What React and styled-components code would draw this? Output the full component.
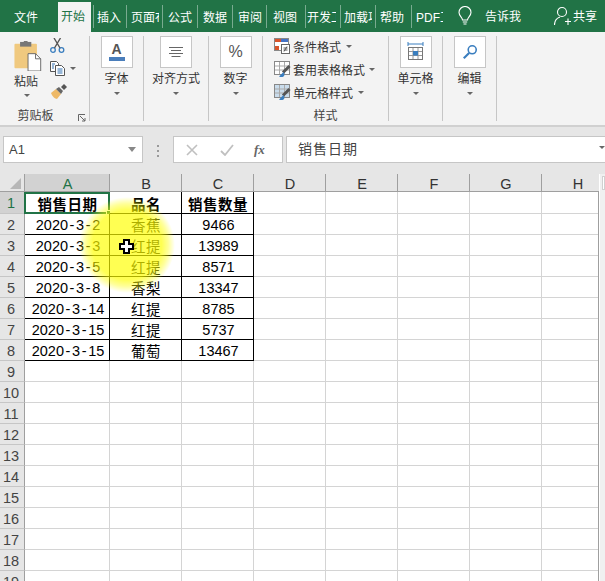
import React from "react";
import styled, { createGlobalStyle } from "styled-components";

const Global = createGlobalStyle`
  html, body { margin: 0; padding: 0; background: #fff; }
  * { box-sizing: border-box; }
`;
const CJK = `"Liberation Sans", "Noto Sans CJK SC", sans-serif`;

const Page = styled.div`
  position: relative; width: 605px; height: 581px; overflow: hidden;
  font-family: ${CJK}; color: #333; background: #fff;
  display: flex; flex-direction: column;
`;
/* ---------- tab bar ---------- */
const TabBar = styled.div`
  flex: 0 0 32px; background: #217346; display: flex; align-items: flex-end; color: #fff; font-size: 12px;
`;
const Tab = styled.div`
  flex: 0 0 ${p => p.$w}px; height: ${p => (p.$active ? 30 : 23)}px;
  margin-bottom: ${p => (p.$active ? 0 : 4)}px;
  margin-right: ${p => (p.$active ? 2 : 0)}px;
  display: flex; align-items: center; overflow: hidden;
  padding: 0 0 ${p => (p.$active ? 4 : 1)}px ${p => p.$pad ?? 4}px;
  background: ${p => (p.$active ? "#f3f3f3" : "transparent")};
  color: ${p => (p.$active ? "#217346" : "#fff")};
  border-left: ${p => (p.$sep ? "1px solid rgba(255,255,255,.4)" : "0")};
`;
const TabText = styled.span`
  display: block; flex: none; width: ${p => p.$clip ?? 40}px; overflow: hidden; white-space: nowrap;
`;
const TabTools = styled.div`
  flex: 1; height: 32px; display: flex; align-items: center; padding-left: 11px; border-left: 1px solid rgba(255,255,255,0); position: relative;
`;
const ToolText = styled.span`
  margin-left: ${p => p.$ml}px; white-space: nowrap; padding-bottom: ${p => p.$pb ?? 0}px;
`;
const ToolIcon = styled.span`
  display: flex; margin-left: ${p => p.$ml ?? 0}px;
`;
/* ---------- ribbon ---------- */
const Ribbon = styled.div`
  flex: 0 0 93px; background: #f3f3f3; display: flex; padding: 4px 0; position: relative;
`;
const Group = styled.div`
  flex: 0 0 ${p => p.$w}px; display: flex; flex-direction: column; align-items: center;
  border-right: 1px solid #c6c6c6; font-size: 12px; color: #333; position: relative;
`;
const LastGroupGap = styled.div`flex: 1;`;
const BoxButton = styled.div`
  width: 32px; height: 32px; background: #fff; border: 1px solid #c6c6c6;
  display: flex; align-items: center; justify-content: center; flex-direction: column;
`;
const BigLabel = styled.div`
  margin-top: 3px; line-height: 16px; white-space: nowrap;
`;
const Caret = styled.span`
  display: block; width: 0; height: 0; border-left: 3px solid transparent; border-right: 3px solid transparent;
  border-top: 3px solid #666; margin-top: ${p => p.$mt ?? 0}px; margin-left: ${p => p.$ml ?? 0}px; flex: none;
`;
const NameCaret = styled(Caret)`
  border-left-width: 4px; border-right-width: 4px; border-top-width: 5px; border-top-color: #888; margin-right: 1px;
`;
const GroupLabel = styled.div`
  margin-top: auto; margin-bottom: -3px; line-height: 14px; height: 15px; color: #444;
  margin-right: ${p => p.$mr ?? 0}px;
`;
const ClipBody = styled.div`
  flex: 1; width: 100%; display: flex;
`;
const PasteCol = styled.div`
  width: 50px; display: flex; flex-direction: column; align-items: flex-start; padding: 5px 0 0 14px;
`;
const SmallCol = styled.div`
  display: flex; flex-direction: column; gap: 8px; padding-top: 2px;
`;
const SmallRow = styled.div`display: flex; align-items: center; height: 15px;`;
const Launcher = styled.svg`
  position: absolute; right: 3px; bottom: -1px;
`;
const StyleList = styled.div`
  width: 100%; padding: 1px 0 0 11px; display: flex; flex-direction: column; gap: 5px;
`;
const StyleRow = styled.div`
  height: 18px; display: flex; align-items: center; gap: 2px; white-space: nowrap;
`;
const BoxLetter = styled.span`
  font-size: ${p => p.$size}px; line-height: ${p => p.$lh}px; color: #555; font-weight: ${p => p.$w ?? 400};
`;
const ColorBar = styled.span`display: block; width: 16px; height: 4px; margin-top: 1px; background: #4a7ebb;`;
/* ---------- formula bar ---------- */
const FormulaBar = styled.div`
  flex: 0 0 49px; background: #e6e6e6; border-top: 2px solid #d0d0d0; display: flex; align-items: flex-start;
  padding-top: 9px;
`;
const NameBox = styled.div`
  margin-left: 3px; width: 140px; height: 27px; background: #fff; border: 1px solid #c6c6c6;
  display: flex; align-items: center; justify-content: space-between; padding: 0 5px 1px 5px; font-size: 13px; color: #444;
`;
const Dots = styled.div`
  width: 30px; display: flex; flex-direction: column; align-items: center; gap: 3px; padding-top: 9px; height: 27px;
`;
const Dot = styled.span`display: block; width: 2px; height: 2px; background: #999;`;
const FxBox = styled.div`
  width: 110px; height: 27px; background: #fff; border: 1px solid #c6c6c6; display: flex; align-items: center;
  padding-left: 12px; gap: 22px; color: #bbb;
`;
const FxText = styled.span`
  font-family: "Liberation Serif", serif; font-style: italic; font-weight: 700; font-size: 13px; color: #666; margin-left: -2px;
`;
const Input = styled.div`
  margin-left: 3px; flex: 1; height: 27px; background: #fff; border: 1px solid #c6c6c6; border-right: 0;
  display: flex; align-items: center; padding: 0 0 4px 11px; font-size: 14px; letter-spacing: 1px; color: #444; justify-content: space-between;
`;
/* ---------- sheet ---------- */
const SheetWrap = styled.div`flex: 1; display: flex; overflow: hidden; background: #e6e6e6;`;
const Sheet = styled.div`
  flex: 0 0 599px; display: grid; grid-template-columns: 25px 85px 72px 72px 72px 72px 72px 72px 72px;
  grid-template-rows: 18px 22px; grid-auto-rows: 21px; align-content: start;
  font-size: 14.5px; color: #000; background: #fff; height: 100%; overflow: hidden;
  position: relative;
`;
const SheetEdge = styled.div`
  position: absolute; right: 0; top: 18px; bottom: 0; width: 1px; background: #9f9f9f;
`;
const Corner = styled.div`
  background: #e6e6e6; border-right: 1px solid #9f9f9f; border-bottom: 1px solid #9f9f9f; position: relative;
  &::after {
    content: ""; position: absolute; right: 3px; bottom: 2px; width: 0; height: 0;
    border-left: 11px solid transparent; border-bottom: 11px solid #b7b7b7;
  }
`;
const ColHead = styled.div`
  background: ${p => (p.$sel ? "#d2d2d2" : "#e6e6e6")};
  color: ${p => (p.$sel ? "#217346" : "#333")};
  border-right: 1px solid #9f9f9f; border-bottom: 1px solid #9f9f9f;
  display: flex; align-items: center; justify-content: center; padding: 3px 0 0 1px;
`;
const RowHead = styled.div`
  background: ${p => (p.$sel ? "#d2d2d2" : "#e6e6e6")};
  color: ${p => (p.$sel ? "#217346" : "#444")};
  border-right: 1px solid ${p => (p.$sel ? "#217346" : "#9f9f9f")}; border-bottom: 1px solid #c6c6c6;
  display: flex; align-items: center; justify-content: center; padding: 1px 2px 0 0;
`;
const Cell = styled.div`
  position: relative; display: flex; align-items: center; justify-content: center; white-space: nowrap;
  border-right: 1px solid ${p => (p.$black ? "#000" : "#d4d4d4")};
  border-bottom: 1px solid ${p => (p.$black ? "#000" : "#d4d4d4")};
  font-weight: ${p => (p.$bold ? 700 : 400)};
  letter-spacing: ${p => (p.$cjk ? 0.5 : 0)}px;
  padding: 1px 0 0 ${p => (p.$cjk ? 1 : 2)}px;
`;
const Selection = styled.span`
  position: absolute; left: -1px; top: 0; right: -1px; bottom: -1px; border: 2px solid #217346; pointer-events: none;
`;
const Handle = styled.span`
  position: absolute; right: -3px; bottom: -3px; width: 5px; height: 5px; background: #217346; border: 1px solid #fff;
`;
const Dash = styled.span`margin: 0 1.6px;`;
const Scroll = styled.div`
  flex: 1; background: #f0f0f0; border-left: 1px solid #fff; padding: 2px 0 0 2px;
`;
const ScrollBtn = styled.div`height: 14px; background: #fff; border: 1px solid #d0d0d0;`;
const Highlight = styled.div`
  position: absolute; left: 79px; top: 197px; width: 96px; height: 96px; border-radius: 50%; pointer-events: none;
  background: radial-gradient(circle closest-side, rgba(255,255,0,.68) 0, rgba(255,255,0,.68) 72%, rgba(255,255,0,.4) 86%, rgba(255,255,0,0) 100%);
`;
const Pointer = styled.svg`position: absolute; left: 119px; top: 239px; pointer-events: none;`;

/* ---------- icons ---------- */
const Paste = () => (
  <svg width="29" height="30" viewBox="0 0 30 32">
    <rect x="0" y="3" width="24" height="26" rx="1" fill="#f0c97f" />
    <rect x="6" y="1" width="12" height="5" fill="#777" />
    <rect x="10" y="0" width="4" height="3" fill="#777" />
    <path d="M14.5 13.5h8l5.5 5.5v13h-13.500z" fill="#fff" stroke="#666" />
    <path d="M22.500 13.500v5.500h5.500" fill="none" stroke="#666" />
  </svg>
);
const Scissors = () => (
  <svg width="15" height="15" viewBox="0 0 15 15" fill="none">
    <circle cx="3" cy="12" r="2.300" stroke="#3a7ebf" strokeWidth="1.300" />
    <circle cx="11.500" cy="12" r="2.300" stroke="#3a7ebf" strokeWidth="1.300" />
    <path d="M4.500 10 10.500 0M10 10 4 0" stroke="#555" strokeWidth="1.400" />
  </svg>
);
const CopyIcon = () => (
  <svg width="16" height="15" viewBox="0 0 16 15" fill="none">
    <path d="M.5.500h6l2 2v8h-8z" fill="#fff" stroke="#555" />
    <path d="M5.500 4.500h6l3 3v7h-9z" fill="#fff" stroke="#555" />
    <path d="M2 3h3M2 5h2M2 7h2M7.500 8h5M7.500 10h5M7.500 12h5" stroke="#2f6fb0" />
  </svg>
);
const Brush = () => (
  <svg width="17" height="15" viewBox="0 0 17 15" fill="none">
    <path d="M1 9 6 5l5 5-4 5c-2 0-5-3-6-6z" fill="#eeb967" />
    <path d="M6 5l3-2 4 4-2 3z" fill="#666" />
    <path d="M11 3l3-3 3 3-3 3z" fill="#555" />
  </svg>
);
const CondFormat = () => (
  <svg width="17" height="17" viewBox="0 0 17 17" fill="none">
    <rect x=".5" y=".5" width="14" height="12" fill="#fff" stroke="#888" />
    <rect x="1" y="1" width="6" height="3" fill="#d9542b" />
    <rect x="1" y="8" width="4" height="4" fill="#d9542b" />
    <rect x="7" y="1" width="7" height="3" fill="#4472c4" />
    <rect x="7.500" y="6.500" width="8" height="9" fill="#fff" stroke="#666" />
    <path d="M9.500 10h4M9.500 12h4M13 8.500l-3 5" stroke="#555" />
  </svg>
);
const TableFmt = ({ fill }) => (
  <svg width="17" height="17" viewBox="0 0 17 17" fill="none">
    <rect x=".5" y=".5" width="15" height="13" fill={fill} stroke="#888" />
    <path d="M5.500 1v12M10.500 1v12M1 5h14M1 9h14" stroke="#aaa" />
    <path d="M15.500 5 9 11.500" stroke="#555" strokeWidth="3" />
    <path d="M9.500 11 5 15.500c2 1 4.500 1 5.500-1.500z" fill="#3a7ebf" />
  </svg>
);
const CellsIcon = () => (
  <svg width="20" height="22" viewBox="0 0 20 22" fill="none">
    <path d="M2 1v4M17 1v4M2 3h15" stroke="#3a7ebf" />
    <rect x="2.500" y="6.500" width="14" height="12" fill="#fff" stroke="#777" />
    <path d="M7 7v11M12 7v11M3 10.500h13M3 14.500h13" stroke="#999" />
    <rect x="7" y="10" width="5" height="4.500" fill="#3a7ebf" />
  </svg>
);
const Search = () => (
  <svg width="16" height="16" viewBox="0 0 18 18" fill="none">
    <circle cx="11.500" cy="6.500" r="4.500" stroke="#3a7ebf" strokeWidth="1.800" />
    <path d="M8 10 2 16" stroke="#3a7ebf" strokeWidth="2.400" />
  </svg>
);
const AlignIcon = () => (
  <svg width="14" height="11" viewBox="0 0 14 11" stroke="#666">
    <path d="M0 .5h14M2 3.500h10M0 6.500h14M2.500 9.500h9" />
  </svg>
);
const Bulb = () => (
  <svg width="14" height="20" viewBox="0 0 14 20" fill="none" stroke="#fff" strokeWidth="1.100">
    <path d="M4.500 14c0-2.500-3.500-4-3.500-7.500a6 6 0 0 1 12 0C13 10 9.500 11.500 9.500 14z" />
    <path d="M4.800 16h4.400M5.500 18h3" />
  </svg>
);
const Person = () => (
  <svg width="18" height="20" viewBox="0 0 18 20" fill="none" stroke="#fff" strokeWidth="1.100">
    <circle cx="8" cy="6" r="4.500" />
    <path d="M.5 19c0-4 2.500-7 5.500-8M11 15.500h6M14 12.500v6.500" />
  </svg>
);

/* ---------- data ---------- */
const tabs = [
  ["文件", 58, false, false, 14], ["开始", 33, true, false, 3],
  ["插入", 33, false, true, 3], ["页面布局", 36, false, true, 4, 28], ["公式", 35, false, true, 5],
  ["数据", 35, false, true, 5], ["审阅", 34, false, true, 5], ["视图", 39, false, true, 6],
  ["开发工具", 35, false, true, 1, 29], ["加载项", 35, false, true, 3, 28], ["帮助", 36, false, true, 4],
  ["PDF工具集", 35, false, true, 4, 27],
];
const cols = ["A", "B", "C", "D", "E", "F", "G", "H"];
const data = [
  ["销售日期", "品名", "销售数量"], ["2020-3-2", "香蕉", "9466"], ["2020-3-3", "红提", "13989"],
  ["2020-3-5", "红提", "8571"], ["2020-3-8", "香梨", "13347"], ["2020-3-14", "红提", "8785"],
  ["2020-3-15", "红提", "5737"], ["2020-3-15", "葡萄", "13467"],
];
const DateText = ({ v }) => {
  const [y, m, d] = v.split("-");
  return <>{y}<Dash>-</Dash>{m}<Dash>-</Dash>{d}</>;
};
const rows = Array.from({ length: 19 }, (_, i) => i);

export default function App() {
  return (
    <Page>
      <Global />
      <TabBar>
        {tabs.map(([t, w, active, sep, pad, clip], i) => (
          <Tab key={i} $w={w} $active={active} $sep={sep} $pad={pad}>
            <TabText $clip={clip}>{t}</TabText>
          </Tab>
        ))}
        <TabTools>
          <Bulb />
          <ToolText $ml={13} $pb={1}>告诉我</ToolText>
          <ToolIcon $ml={33}><Person /></ToolIcon>
          <ToolText $ml={1} $pb={1}>共享</ToolText>
        </TabTools>
      </TabBar>
      <Ribbon>
        <Group $w={90}>
          <ClipBody>
            <PasteCol>
              <Paste />
              <BigLabel>粘贴</BigLabel>
              <Caret $mt={4} $ml={10} />
            </PasteCol>
            <SmallCol>
              <SmallRow><Scissors /></SmallRow>
              <SmallRow><CopyIcon /><Caret $ml={4} /></SmallRow>
              <SmallRow><Brush /></SmallRow>
            </SmallCol>
          </ClipBody>
          <GroupLabel $mr={18}>剪贴板</GroupLabel>
          <Launcher width="8" height="8" viewBox="0 0 8 8" fill="none" stroke="#666">
            <path d="M.5 7V.5H7M2 2l5 5M4 7h3V4" />
          </Launcher>
        </Group>
        <Group $w={54}>
          <BoxButton>
            <BoxLetter $size={14} $lh={13} $w={700}>A</BoxLetter>
            <ColorBar />
          </BoxButton>
          <BigLabel>字体</BigLabel>
          <Caret $mt={5} />
        </Group>
        <Group $w={65}>
          <BoxButton><AlignIcon /></BoxButton>
          <BigLabel>对齐方式</BigLabel>
          <Caret $mt={5} />
        </Group>
        <Group $w={54}>
          <BoxButton><BoxLetter $size={16} $lh={18}>%</BoxLetter></BoxButton>
          <BigLabel>数字</BigLabel>
          <Caret $mt={5} />
        </Group>
        <Group $w={126}>
          <StyleList>
            <StyleRow><CondFormat /><span>条件格式</span><Caret $ml={3} /></StyleRow>
            <StyleRow><TableFmt fill="#fff" /><span>套用表格格式</span><Caret $ml={2} /></StyleRow>
            <StyleRow><TableFmt fill="#c9dcec" /><span>单元格样式</span><Caret $ml={3} /></StyleRow>
          </StyleList>
          <GroupLabel>样式</GroupLabel>
        </Group>
        <Group $w={54}>
          <BoxButton><CellsIcon /></BoxButton>
          <BigLabel>单元格</BigLabel>
          <Caret $mt={5} />
        </Group>
        <Group $w={54}>
          <BoxButton><Search /></BoxButton>
          <BigLabel>编辑</BigLabel>
          <Caret $mt={5} />
        </Group>
        <LastGroupGap />
      </Ribbon>
      <FormulaBar>
        <NameBox><span>A1</span><NameCaret /></NameBox>
        <Dots><Dot /><Dot /><Dot /></Dots>
        <FxBox>
          <svg width="12" height="12" viewBox="0 0 12 12" stroke="#c0c0c0" strokeWidth="1.600"><path d="M1 1l10 10M11 1 1 11" /></svg>
          <svg width="14" height="12" viewBox="0 0 14 12" stroke="#c0c0c0" strokeWidth="1.800" fill="none"><path d="M1 7l4 4 8-10" /></svg>
          <FxText>fx</FxText>
        </FxBox>
        <Input><span>销售日期</span><Caret /></Input>
      </FormulaBar>
      <SheetWrap>
        <Sheet>
          <Corner />
          {cols.map((c, i) => <ColHead key={c} $sel={i === 0}>{c}</ColHead>)}
          {rows.map(r => (
            <React.Fragment key={r}>
              <RowHead $sel={r === 0}>{r + 1}</RowHead>
              {cols.map((c, ci) => {
                const v = data[r]?.[ci];
                return (
                  <Cell key={c} $black={v !== undefined} $bold={r === 0 && v !== undefined} $cjk={r === 0 || ci === 1}>
                    {ci === 0 && r > 0 && v ? <DateText v={v} /> : v}
                    {r === 0 && ci === 0 && <Selection><Handle /></Selection>}
                  </Cell>
                );
              })}
            </React.Fragment>
          ))}
          <SheetEdge />
        </Sheet>
        <Scroll><ScrollBtn /></Scroll>
      </SheetWrap>
      <Highlight />
      <Pointer width="16" height="16" viewBox="0 0 16 16">
        <path d="M5 1h5v4h4v5h-4v4H5v-4H1V5h4z" fill="#fff" stroke="#000" strokeWidth="2" />
      </Pointer>
    </Page>
  );
}
